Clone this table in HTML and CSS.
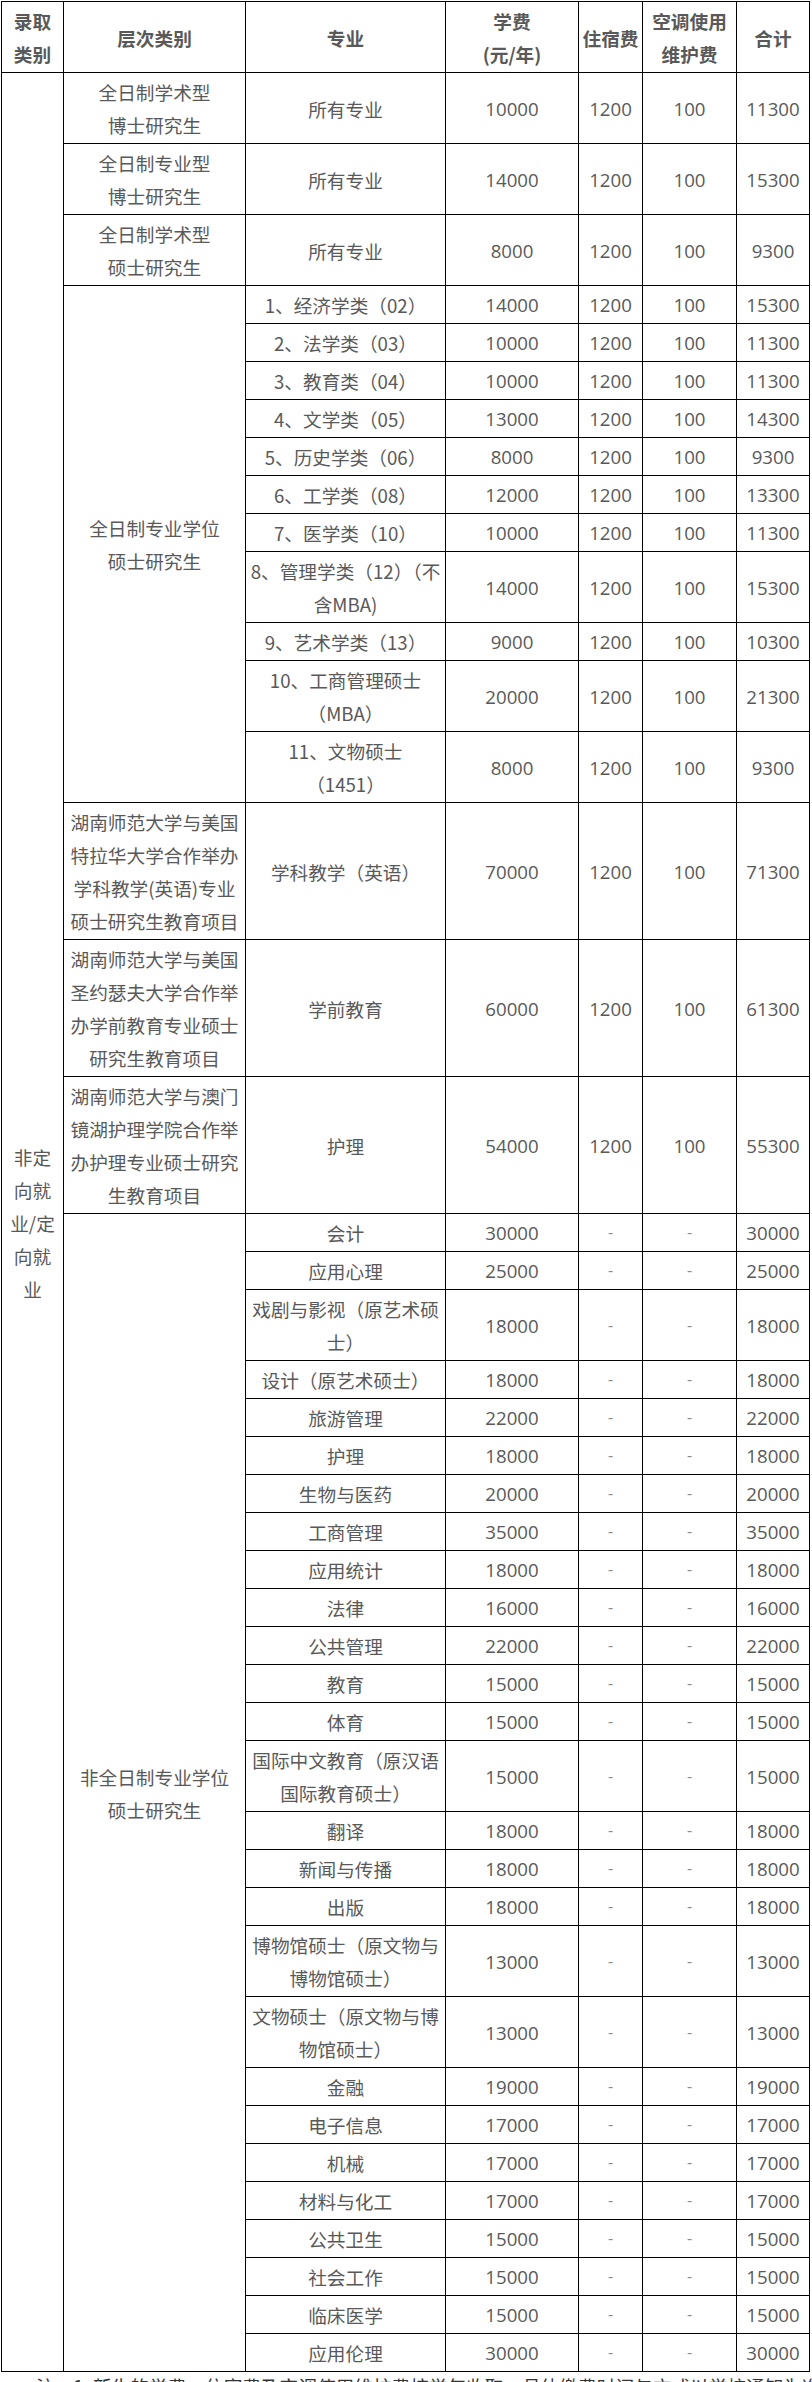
FILE: index.html
```html
<!DOCTYPE html>
<html lang="zh-CN">
<head>
<meta charset="utf-8">
<title>研究生收费标准</title>
<link rel="stylesheet" href="styles.css">
</head>
<body>
<div class="page">
<table class="fees">
<colgroup>
<col class="c1"><col class="c2"><col class="c3"><col class="c4"><col class="c5"><col class="c6"><col class="c7">
</colgroup>
<thead>
<tr><th>录取<br>类别</th><th>层次类别</th><th>专业</th><th>学费<br>(元/年)</th><th>住宿费</th><th>空调使用<br>维护费</th><th>合计</th></tr>
</thead>
<tbody>
<tr><td rowspan="44">非定<br>向就<br>业/定<br>向就<br>业</td><td>全日制学术型<br>博士研究生</td><td>所有专业</td><td class="n">10000</td><td class="n">1200</td><td class="n">100</td><td class="n">11300</td></tr>
<tr><td>全日制专业型<br>博士研究生</td><td>所有专业</td><td class="n">14000</td><td class="n">1200</td><td class="n">100</td><td class="n">15300</td></tr>
<tr><td>全日制学术型<br>硕士研究生</td><td>所有专业</td><td class="n">8000</td><td class="n">1200</td><td class="n">100</td><td class="n">9300</td></tr>
<tr><td rowspan="11">全日制专业学位<br>硕士研究生</td><td>1、经济学类（02）</td><td class="n">14000</td><td class="n">1200</td><td class="n">100</td><td class="n">15300</td></tr>
<tr><td>2、法学类（03）</td><td class="n">10000</td><td class="n">1200</td><td class="n">100</td><td class="n">11300</td></tr>
<tr><td>3、教育类（04）</td><td class="n">10000</td><td class="n">1200</td><td class="n">100</td><td class="n">11300</td></tr>
<tr><td>4、文学类（05）</td><td class="n">13000</td><td class="n">1200</td><td class="n">100</td><td class="n">14300</td></tr>
<tr><td>5、历史学类（06）</td><td class="n">8000</td><td class="n">1200</td><td class="n">100</td><td class="n">9300</td></tr>
<tr><td>6、工学类（08）</td><td class="n">12000</td><td class="n">1200</td><td class="n">100</td><td class="n">13300</td></tr>
<tr><td>7、医学类（10）</td><td class="n">10000</td><td class="n">1200</td><td class="n">100</td><td class="n">11300</td></tr>
<tr><td>8、管理学类（12）（不<br>含MBA)</td><td class="n">14000</td><td class="n">1200</td><td class="n">100</td><td class="n">15300</td></tr>
<tr><td>9、艺术学类（13）</td><td class="n">9000</td><td class="n">1200</td><td class="n">100</td><td class="n">10300</td></tr>
<tr><td>10、工商管理硕士<br>（MBA）</td><td class="n">20000</td><td class="n">1200</td><td class="n">100</td><td class="n">21300</td></tr>
<tr><td>11、文物硕士<br>（1451）</td><td class="n">8000</td><td class="n">1200</td><td class="n">100</td><td class="n">9300</td></tr>
<tr><td>湖南师范大学与美国<br>特拉华大学合作举办<br>学科教学(英语)专业<br>硕士研究生教育项目</td><td>学科教学（英语）</td><td class="n">70000</td><td class="n">1200</td><td class="n">100</td><td class="n">71300</td></tr>
<tr><td>湖南师范大学与美国<br>圣约瑟夫大学合作举<br>办学前教育专业硕士<br>研究生教育项目</td><td>学前教育</td><td class="n">60000</td><td class="n">1200</td><td class="n">100</td><td class="n">61300</td></tr>
<tr><td>湖南师范大学与澳门<br>镜湖护理学院合作举<br>办护理专业硕士研究<br>生教育项目</td><td>护理</td><td class="n">54000</td><td class="n">1200</td><td class="n">100</td><td class="n">55300</td></tr>
<tr><td rowspan="27">非全日制专业学位<br>硕士研究生</td><td>会计</td><td class="n">30000</td><td class="n d">-</td><td class="n d">-</td><td class="n">30000</td></tr>
<tr><td>应用心理</td><td class="n">25000</td><td class="n d">-</td><td class="n d">-</td><td class="n">25000</td></tr>
<tr><td>戏剧与影视（原艺术硕<br>士）</td><td class="n">18000</td><td class="n d">-</td><td class="n d">-</td><td class="n">18000</td></tr>
<tr><td>设计（原艺术硕士）</td><td class="n">18000</td><td class="n d">-</td><td class="n d">-</td><td class="n">18000</td></tr>
<tr><td>旅游管理</td><td class="n">22000</td><td class="n d">-</td><td class="n d">-</td><td class="n">22000</td></tr>
<tr><td>护理</td><td class="n">18000</td><td class="n d">-</td><td class="n d">-</td><td class="n">18000</td></tr>
<tr><td>生物与医药</td><td class="n">20000</td><td class="n d">-</td><td class="n d">-</td><td class="n">20000</td></tr>
<tr><td>工商管理</td><td class="n">35000</td><td class="n d">-</td><td class="n d">-</td><td class="n">35000</td></tr>
<tr><td>应用统计</td><td class="n">18000</td><td class="n d">-</td><td class="n d">-</td><td class="n">18000</td></tr>
<tr><td>法律</td><td class="n">16000</td><td class="n d">-</td><td class="n d">-</td><td class="n">16000</td></tr>
<tr><td>公共管理</td><td class="n">22000</td><td class="n d">-</td><td class="n d">-</td><td class="n">22000</td></tr>
<tr><td>教育</td><td class="n">15000</td><td class="n d">-</td><td class="n d">-</td><td class="n">15000</td></tr>
<tr><td>体育</td><td class="n">15000</td><td class="n d">-</td><td class="n d">-</td><td class="n">15000</td></tr>
<tr><td>国际中文教育（原汉语<br>国际教育硕士）</td><td class="n">15000</td><td class="n d">-</td><td class="n d">-</td><td class="n">15000</td></tr>
<tr><td>翻译</td><td class="n">18000</td><td class="n d">-</td><td class="n d">-</td><td class="n">18000</td></tr>
<tr><td>新闻与传播</td><td class="n">18000</td><td class="n d">-</td><td class="n d">-</td><td class="n">18000</td></tr>
<tr><td>出版</td><td class="n">18000</td><td class="n d">-</td><td class="n d">-</td><td class="n">18000</td></tr>
<tr><td>博物馆硕士（原文物与<br>博物馆硕士）</td><td class="n">13000</td><td class="n d">-</td><td class="n d">-</td><td class="n">13000</td></tr>
<tr><td>文物硕士（原文物与博<br>物馆硕士）</td><td class="n">13000</td><td class="n d">-</td><td class="n d">-</td><td class="n">13000</td></tr>
<tr><td>金融</td><td class="n">19000</td><td class="n d">-</td><td class="n d">-</td><td class="n">19000</td></tr>
<tr><td>电子信息</td><td class="n">17000</td><td class="n d">-</td><td class="n d">-</td><td class="n">17000</td></tr>
<tr><td>机械</td><td class="n">17000</td><td class="n d">-</td><td class="n d">-</td><td class="n">17000</td></tr>
<tr><td>材料与化工</td><td class="n">17000</td><td class="n d">-</td><td class="n d">-</td><td class="n">17000</td></tr>
<tr><td>公共卫生</td><td class="n">15000</td><td class="n d">-</td><td class="n d">-</td><td class="n">15000</td></tr>
<tr><td>社会工作</td><td class="n">15000</td><td class="n d">-</td><td class="n d">-</td><td class="n">15000</td></tr>
<tr><td>临床医学</td><td class="n">15000</td><td class="n d">-</td><td class="n d">-</td><td class="n">15000</td></tr>
<tr><td>应用伦理</td><td class="n">30000</td><td class="n d">-</td><td class="n d">-</td><td class="n">30000</td></tr>
</tbody>
</table>
<p class="note">注：1. 新生的学费、住宿费及空调使用维护费按学年收取，具体缴费时间与方式以学校通知为准。</p>
</div>
</body>
</html>
```

FILE: styles.css
```css
html, body {
  margin: 0;
  padding: 0;
  background: #ffffff;
}

.page {
  padding: 1px 0 0 1px;
  font-family: "Noto Sans CJK SC", "Noto Sans", sans-serif;
  font-size: 18.67px;
  color: #595959;
}

.fees {
  border-collapse: collapse;
  table-layout: fixed;
  width: 809px;
}

.fees .c1 { width: 62px; }
.fees .c2 { width: 182px; }
.fees .c3 { width: 200px; }
.fees .c4 { width: 133px; }
.fees .c5 { width: 64px; }
.fees .c6 { width: 94px; }
.fees .c7 { width: 73px; }

.fees th,
.fees td {
  border: 1px solid #000000;
  padding: 2px 2px;
  line-height: 33px;
  text-align: center;
  vertical-align: middle;
  white-space: nowrap;
  overflow: visible;
}

.fees td.n {
  font-family: "Open Sans", "Noto Sans", sans-serif;
  font-size: 18.67px;
}

.fees td.d {
  color: #8c8c8c;
  font-size: 16px;
}

.fees th {
  font-weight: 700;
  color: #595959;
}

.note {
  margin: 0;
  padding-left: 35px;
  font-size: 18.67px;
  line-height: 28px;
  color: #333333;
  white-space: nowrap;
  overflow: hidden;
}
```
